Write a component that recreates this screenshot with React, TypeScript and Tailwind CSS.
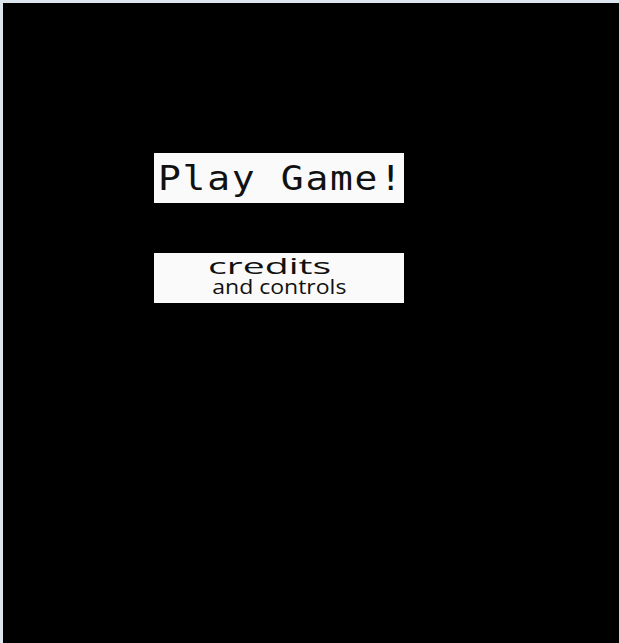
export default function App() {
  return (
    <div className="w-[619px] h-[643px] bg-[#dde6ee] pl-[3px] pt-[3px] overflow-hidden">
      <div className="w-full h-full bg-black flex flex-col items-start pl-[151px] pt-[150px] gap-[50px]">
        {/* main menu buttons */}
        <button className="w-[250px] h-[50px] bg-[#fafafa] text-left pl-[4px] pt-[1px] cursor-pointer">
          <span className="block origin-left scale-x-[1.15] text-[33px] leading-[33px] tracking-[1.5px] text-[#111] font-['DejaVu_Sans_Mono',monospace] whitespace-nowrap">
            Play Game!
          </span>
        </button>
        <button className="w-[250px] h-[50px] bg-[#fafafa] flex flex-col items-center cursor-pointer text-[#111] font-['Open_Sans',sans-serif]">
          <span className="block mt-[1px] text-[22px] leading-[22px] scale-x-[1.78] -translate-x-[9px]">credits</span>
          <span className="block text-[20px] leading-[22px] scale-x-[1.15]">and controls</span>
        </button>
      </div>
    </div>
  );
}
